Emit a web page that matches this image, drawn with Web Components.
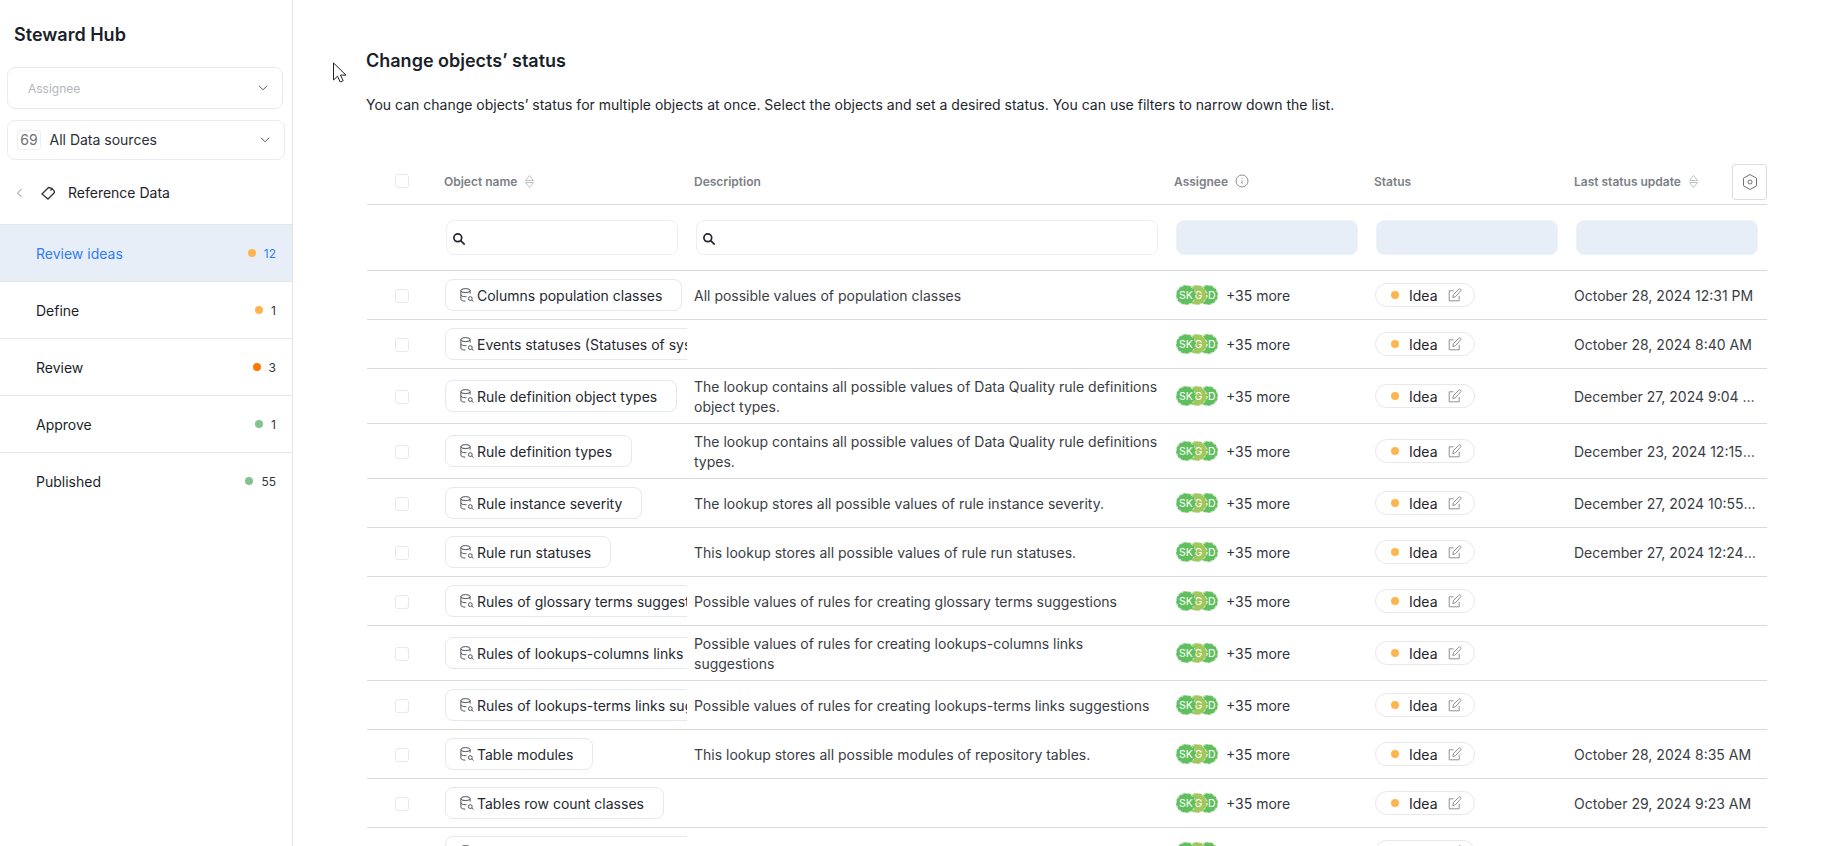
<!DOCTYPE html>
<html><head><meta charset="utf-8"><title>Steward Hub</title>
<style>
html,body{margin:0;padding:0;height:846px;overflow:hidden;background:#fff;font-family:Inter,"Liberation Sans",sans-serif;color:#1b1f2a}
</style></head><body>
<x-app></x-app>
<script>
const chev=`<svg width="10" height="6" viewBox="0 0 10 6" fill="none" stroke="#555" stroke-width="1"><path d="M1 .8l4 4 4-4"/></svg>`;
const sortIcon=`<svg style="margin-left:1px" width="9" height="13" viewBox="0 0 9 13" fill="none" stroke="#bfc1c6" stroke-width="1"><path d="M.5 5.500L4.500.500 8.500 5.500z"/><path d="M.5 7.500L4.500 12.500 8.500 7.500z"/></svg>`;
const searchIcon=`<svg width="14" height="14" viewBox="0 0 14 14" fill="none" stroke="#23262d" stroke-width="1.7"><circle cx="5.8" cy="5.8" r="3.9"/><path d="M8.700 8.700l4 4"/></svg>`;
const dbIcon=`<svg width="14" height="14" viewBox="0 0 14 14" fill="none" stroke="#4d5159" stroke-width="1"><ellipse cx="5.500" cy="2.600" rx="4.600" ry="2"/><path d="M.9 2.600v8.600c0 1.200 2 1.900 4.400 1.900"/><path d="M10.100 2.600v3"/><path d="M.9 6.800c0 1.100 2 1.900 4.600 1.900h1"/><circle cx="10.300" cy="10.600" r="1.900"/><path d="M11.800 12l1.600 1.600"/></svg>`;
const editIcon=`<svg width="14" height="14" viewBox="0 0 14 14" fill="none" stroke="#8d9096" stroke-width="1"><path d="M5.500 2.800H1.200v10h10V7.800"/><path d="M4.800 9.500l.6-2.800L10.800 1.200c.5-.5 1.300-.5 1.800 0s.5 1.300 0 1.800L7.300 8.800z"/></svg>`;

function def(name,render){customElements.define(name,class extends HTMLElement{
  connectedCallback(){if(this.shadowRoot)return;this.attachShadow({mode:'open'}).innerHTML=render(this)}
})}

def('x-dot',h=>`<style>:host{display:inline-block;width:8px;height:8px;border-radius:50%;background:${h.getAttribute('color')||'#ffb54f'}}</style>`);

def('x-select',h=>{const b=h.getAttribute('badge');return `<style>
:host{display:flex;align-items:center;box-sizing:border-box;margin-left:7px;border:1px solid #e9ebef;border-radius:8px;background:#fff;height:${b?40:41.5}px;width:${b?278:276}px;padding:0 14px 0 ${b?9:20}px;font-size:${b?14:12}px;color:${b?'#2a2e37':'#b4b6ba'}}
.t{flex:1;padding-top:${b?0:2}px}
.b{width:24px;height:20px;box-sizing:border-box;border:1px solid #edf0f6;border-radius:3px;color:#6f7278;font-size:14px;display:flex;align-items:center;justify-content:center;margin-right:8.5px}
</style>${b?`<span class="b">${b}</span>`:''}<span class="t"><slot></slot></span>${chev}`});

def('x-nav-item',h=>{const a=h.hasAttribute('active');return `<style>
:host{display:flex;align-items:center;box-sizing:border-box;height:57px;padding:2px 16px 0 36px;border-bottom:1px solid #e6e6e6;font-size:14px;background:${a?'#e8eef8':'transparent'};color:${a?'#2f7df6':'#1b1f2a'}}
:host([last]){border-bottom:none;padding-top:1px}
.t{flex:1}.n{font-size:12px;margin-left:8px;color:${a?'#2f7df6':'#33363d'}}
x-dot{margin-top:-2px}
</style><span class="t"><slot></slot></span><x-dot color="${h.getAttribute('color')}"></x-dot><span class="n">${h.getAttribute('count')}</span>`});

def('x-sidebar',()=>`<style>
:host{display:block;box-sizing:border-box;width:293px;height:846px;border-right:1px solid #e4e4e4;flex:none}
h1{margin:0;padding:24px 14px 21px;font-size:18px;line-height:22px;font-weight:600;color:#1b1f2a}
.gap{height:11px}
.ref{display:flex;align-items:center;height:65px;box-sizing:border-box;padding:2px 0 0 15px;font-size:14px;color:#1f232c;border-bottom:1px solid #e6e6e6}
.ref svg:first-child{margin-right:17px}.ref svg+svg{margin-right:13px}
</style>
<h1>Steward Hub</h1>
<x-select>Assignee</x-select><div class="gap"></div>
<x-select badge="69">All Data sources</x-select>
<div class="ref"><svg width="9" height="10" viewBox="0 0 9 10" fill="none" stroke="#8d9096"><path d="M6.500 1L2.500 5l4 4"/></svg><svg width="14" height="14" viewBox="0 0 14 14" fill="none" stroke="#33363d" stroke-width="1.300"><path d="M1 8L7.500 1.500 10 2l3 2.500.5 2L7 13z"/><path d="M9.500 4.500l2-2.500"/></svg><span>Reference Data</span></div>
<x-nav-item active color="#ffb54f" count="12">Review ideas</x-nav-item>
<x-nav-item color="#ffb54f" count="1">Define</x-nav-item>
<x-nav-item color="#ff7a00" count="3">Review</x-nav-item>
<x-nav-item color="#82c38f" count="1">Approve</x-nav-item>
<x-nav-item last color="#82c38f" count="55">Published</x-nav-item>`);

def('x-check',()=>`<style>:host{display:block;width:14px;height:14px;box-sizing:border-box;border:1px solid #e6e8ec;border-radius:3px;background:#fff}</style>`);

def('x-chip',()=>`<style>
:host{display:inline-flex;align-items:center;box-sizing:border-box;height:32px;border:1px solid #e4e8f1;border-radius:8px;padding:0 19px 0 14px;font-size:14px;color:#25282f;white-space:nowrap;background:#fff;flex:none}
svg{margin-right:3px;flex:none}
span{padding-top:1px}
</style>${dbIcon}<span><slot></slot></span>`);

def('x-avatars',()=>`<style>
:host{display:inline-flex;align-items:center;font-size:14px;color:#33363d}
i{display:flex;align-items:center;justify-content:center;font-style:normal;width:20px;height:20px;border-radius:50%;box-sizing:border-box;color:#fff;font-size:10.500px;background:#5fbf5f;margin-left:-9px;outline:1px dashed #cfe9c4;outline-offset:-1px;position:relative}
i:first-child{margin-left:0;z-index:3}
i:nth-child(2){background:#9fc75d;z-index:2}
i:nth-child(3){z-index:1}
.w{display:flex;margin-right:8px}
</style><span class="w"><i>SK</i><i>IG</i><i>GD</i></span>+35 more`);

def('x-status',()=>`<style>
:host{display:inline-flex;align-items:center;box-sizing:border-box;width:100px;height:24px;border:1px solid #e8e8ec;border-radius:12px;padding:0 0 0 15px;font-size:14px;color:#1f232c;background:#fff}
span{margin:0 10px;padding-top:1px}
x-dot{margin-top:-1px}
</style><x-dot color="#ffb54f"></x-dot><span>Idea</span>${editIcon}`);

const COLS='70px 250px 480px 200px 200px 200px';
def('x-head',()=>`<style>
:host{display:grid;grid-template-columns:${COLS};height:41px;box-sizing:border-box;border-bottom:1px solid #d9d9d9;font-size:12px;font-weight:600;color:#7b7f86}
div{display:flex;align-items:center;padding:0 7px;gap:7px;height:34px}
.c{padding:0 0 0 28px}
.l{justify-content:flex-start;position:relative}
.btn{display:flex;align-items:center;justify-content:center;position:absolute;right:0;top:0;width:35px;height:36px;box-sizing:border-box;border:1px solid #dcdde0;border-radius:3px;padding:0;background:#fff}
</style>
<div class="c"><x-check></x-check></div>
<div>Object name ${sortIcon}</div><div>Description</div>
<div>Assignee <svg width="14" height="14" viewBox="0 0 14 14" fill="none" stroke="#8d9096"><circle cx="7" cy="7" r="6"/><path d="M7 6.400v3.400M7 4v1"/></svg></div>
<div>Status</div>
<div class="l">Last status update ${sortIcon}<span class="btn"><svg width="16" height="18" viewBox="0 0 16 18" fill="none" stroke="#6f7278"><path d="M8 1.500l6.500 3.700v7.600L8 16.500l-6.500-3.700V5.200z"/><circle cx="8" cy="9" r="2"/></svg></span></div>`);

def('x-filter',()=>`<style>
:host{display:grid;grid-template-columns:${COLS};height:66px;box-sizing:border-box;border-bottom:1px solid #d9d9d9;padding-top:15px}
.i{box-sizing:border-box;height:35px;border:1px solid #eceef3;border-radius:8px;margin:0 9px;display:flex;align-items:center;padding-left:5px;background:#fff}
.i svg{margin-top:3px}
.e{background:#e8eef8;border-color:#eef2f9}
</style><span></span><div class="i">${searchIcon}</div><div class="i">${searchIcon}</div><div class="i e"></div><div class="i e"></div><div class="i e"></div>`);

def('x-row',h=>`<style>
:host{display:grid;grid-template-columns:${COLS};box-sizing:border-box;border-bottom:1px solid #d9d9d9;font-size:14px;align-items:center;color:#3a3d44}
.c{padding:2px 0 0 28px}
.n{padding:8px 0 8px 8px;overflow:hidden;display:flex}
.d{padding:8px 8px 6px 7px;line-height:20px}
.a{padding:0 8px 0 9px}
.t{padding:0 8px}
.u{padding:1px 9px 0 7px;overflow:hidden;white-space:nowrap;text-overflow:ellipsis}
</style>
<div class="c"><x-check></x-check></div>
<div class="n"><x-chip>${h.getAttribute('name')}</x-chip></div>
<div class="d">${h.getAttribute('desc')||''}</div>
<div class="a"><x-avatars></x-avatars></div>
<div class="t"><x-status></x-status></div>
<div class="u">${h.getAttribute('date')||''}</div>`);

def('x-cursor',()=>`<style>:host{position:absolute;left:332px;top:62px;width:16px;height:22px;display:block}</style><svg width="16" height="22" viewBox="0 0 16 22"><path d="M1.500 1v17l4-3.800 2.700 5.800 3-1.300-2.700-5.600H14z" fill="#fff" stroke="#222" stroke-width="1"/></svg>`);

const rows=[
["Columns population classes","All possible values of population classes","October 28, 2024 12:31 PM"],
["Events statuses (Statuses of system events)","","October 28, 2024 8:40 AM"],
["Rule definition object types","The lookup contains all possible values of Data Quality rule definitions object types.","December 27, 2024 9:04 AM"],
["Rule definition types","The lookup contains all possible values of Data Quality rule definitions types.","December 23, 2024 12:15 PM"],
["Rule instance severity","The lookup stores all possible values of rule instance severity.","December 27, 2024 10:55 AM"],
["Rule run statuses","This lookup stores all possible values of rule run statuses.","December 27, 2024 12:24 PM"],
["Rules of glossary terms suggestions","Possible values of rules for creating glossary terms suggestions",""],
["Rules of lookups-columns links suggestions","Possible values of rules for creating lookups-columns links suggestions",""],
["Rules of lookups-terms links suggestions","Possible values of rules for creating lookups-terms links suggestions",""],
["Table modules","This lookup stores all possible modules of repository tables.","October 28, 2024 8:35 AM"],
["Tables row count classes","","October 29, 2024 9:23 AM"],
["Tables size population classes","",""]];
const esc=s=>s.replace(/"/g,'&quot;');

def('x-main',()=>`<style>
:host{display:block;flex:1;box-sizing:border-box;padding:49px 59px 0 74px;min-width:0}
h2{margin:0 0 0 -1px;font-size:18px;line-height:24px;font-weight:600;color:#1b1f2a}
p{margin:22px 0 49px -1px;font-size:14px;line-height:20px;color:#23262d}
</style>
<h2>Change objects’ status</h2>
<p>You can change objects’ status for multiple objects at once. Select the objects and set a desired status. You can use filters to narrow down the list.</p>
<x-head></x-head><x-filter></x-filter>
${rows.map(r=>`<x-row name="${esc(r[0])}" desc="${esc(r[1])}" date="${esc(r[2])}"></x-row>`).join('')}`);

def('x-app',()=>`<style>:host{display:flex;width:1826px;height:846px;overflow:hidden;position:relative}</style><x-sidebar></x-sidebar><x-main></x-main><x-cursor></x-cursor>`);
</script>
</body></html>
